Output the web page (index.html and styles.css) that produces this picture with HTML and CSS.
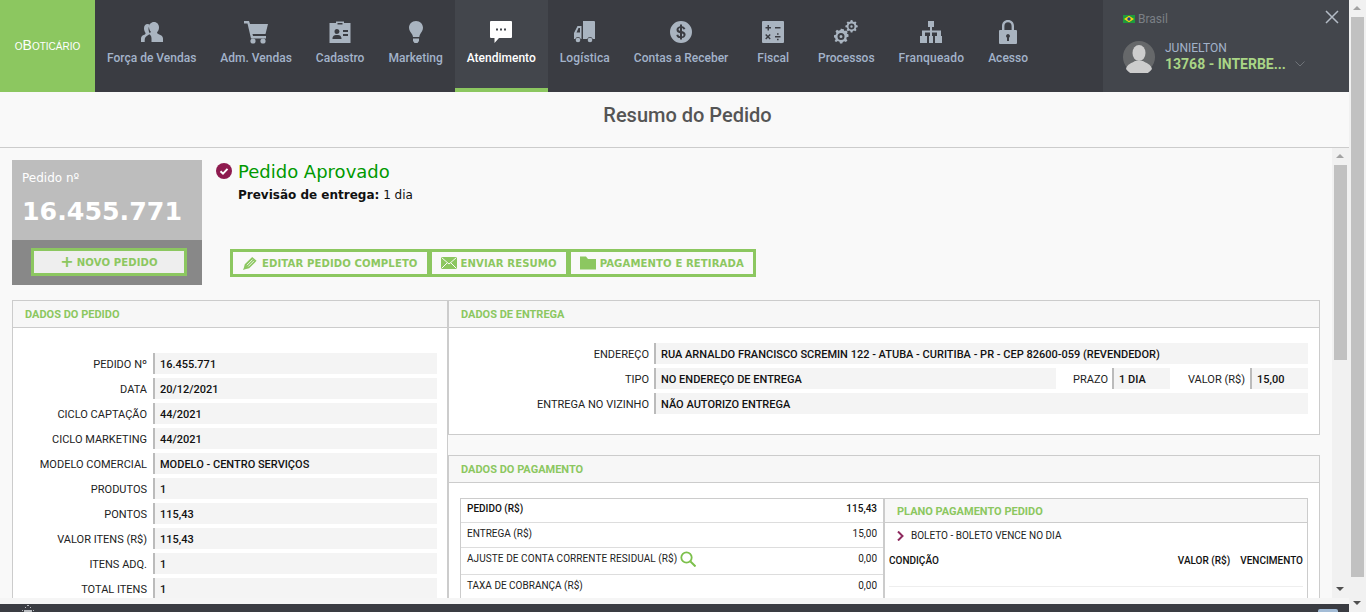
FILE: index.html
```html
<!DOCTYPE html>
<html lang="pt-BR">
<head>
    <meta charset="UTF-8">
    <meta name="viewport" content="width=device-width, initial-scale=1.0">
    <title>Resumo do Pedido</title>
    <link rel="stylesheet" href="styles.css">
</head>
<body>
<div class="page">
    <div class="main">
        <!-- Top menu -->
        <header class="topbar">
            <div class="logo">oBoticário</div>
            <nav class="menu">
                <a class="menu-item">
                    <svg viewBox="0 0 24 24"><path d="M14 2c3 0 5 2.400 5 5.500 0 2-.8 3.600-1.900 4.700 0 1 .4 1.500 1.600 2 2.300.9 4.300 1.900 4.300 4.300v3.500H11.500v-3.500c0-2.400-1.200-3.800-3-4.700 1.500-.6 2.300-1.200 2.300-2.200-1-1.100-1.800-2.700-1.800-4.600C9 4.400 11 2 14 2z"/><path d="M7.500 4c1 0 1.800.3 2.400.9-1 1.300-1.500 3-1.400 4.700.1 1.500.6 2.900 1.400 4 0 .7-.8 1-2 1.600-2.200 1.100-3.200 2.800-3.200 4.800v2H1v-3.500c0-2 1.500-3 3.300-3.700 1-.4 1.300-.9 1.300-1.700C4.600 11.600 4 10.100 4 8.300 4 5.800 5.400 4 7.500 4z"/></svg>
                    <span>Força de Vendas</span>
                </a>
                <a class="menu-item">
                    <svg viewBox="0 0 24 24"><path d="M0 1h5l1 3h18l-2.500 10H8.500l.5 2h13v2.500H7L3.500 3.500H0z"/><circle cx="9" cy="21" r="2.600"/><circle cx="19" cy="21" r="2.600"/></svg>
                    <span>Adm. Vendas</span>
                </a>
                <a class="menu-item">
                    <svg viewBox="0 0 24 24"><path fill-rule="evenodd" d="M1.500 3H8V1.500h8V3h6.500v20h-21zM9.500 3v1.500h5V3zM9 9a2.500 2.500 0 1 0 0 5 2.500 2.500 0 0 0 0-5zM4.500 19h9c0-2.500-1-4-4.500-4s-4.500 1.500-4.500 4zM15 10v2h5v-2zM15 14v2h5v-2z"/></svg>
                    <span>Cadastro</span>
                </a>
                <a class="menu-item">
                    <svg viewBox="0 0 24 24"><path d="M12 1c4.200 0 7 3 7 6.800 0 3-2 4.800-3 6.700-.4.800-.6 1.500-.7 2.500H9c-.1-1-.4-1.700-.8-2.500C7 12.600 5 10.800 5 7.800 5 4 7.800 1 12 1z"/><path d="M9 18.500h6V21l-1.500 2h-3L9 21z"/></svg>
                    <span>Marketing</span>
                </a>
                <a class="menu-item active">
                    <svg viewBox="0 0 24 24"><path fill-rule="evenodd" d="M2 1h20a1 1 0 0 1 1 1v15a1 1 0 0 1-1 1H10l-4.500 5v-5H2a1 1 0 0 1-1-1V2a1 1 0 0 1 1-1zM7 8.500v2h2v-2zM11 8.500v2h2v-2zM15 8.500v2h2v-2z"/></svg>
                    <span>Atendimento</span>
                </a>
                <a class="menu-item spaced-sm">
                    <svg viewBox="0 0 24 24"><path fill-rule="evenodd" d="M10 1h11a1 1 0 0 1 1 1v17h-2.200a3 3 0 0 0-5.600 0H10zM8.500 6v13H7.800a3 3 0 0 0-5.600 0H1v-6l3.500-7zM3.500 12.500h3.500V8H5.500z"/><circle cx="5" cy="20" r="2.300"/><circle cx="17" cy="20" r="2.300"/></svg>
                    <span>Logística</span>
                </a>
                <a class="menu-item">
                    <svg viewBox="0 0 24 24"><path fill-rule="evenodd" d="M12 1a11 11 0 1 1 0 22 11 11 0 0 1 0-22zM11 4.500v1.700c-2 .3-3.500 1.600-3.500 3.500 0 2.200 1.700 3 3.500 3.500v3c-.9-.2-1.500-.7-1.700-1.700l-2 .4c.3 1.900 1.700 3 3.700 3.200v1.400h2v-1.400c2.100-.3 3.600-1.600 3.600-3.600 0-2.300-1.800-3.100-3.600-3.600V8.100c.7.200 1.200.6 1.400 1.400l2-.4c-.3-1.700-1.600-2.700-3.400-2.900V4.500zM11 8.100v2.800c-.9-.3-1.400-.6-1.400-1.300 0-.8.600-1.300 1.400-1.500zM13 13.500c1 .3 1.500.7 1.500 1.400 0 .8-.6 1.300-1.500 1.500z"/></svg>
                    <span>Contas a Receber</span>
                </a>
                <a class="menu-item wide">
                    <svg viewBox="0 0 24 24"><path fill-rule="evenodd" d="M2 1h20a1 1 0 0 1 1 1v20a1 1 0 0 1-1 1H2a1 1 0 0 1-1-1V2a1 1 0 0 1 1-1zM6.500 5v2h-2v1.500h2v2H8v-2h2V7H8V5zM14 7v1.500h5.500V7zM5.200 14l-1 1 1.700 1.800-1.700 1.700 1 1 1.800-1.700 1.700 1.700 1-1-1.700-1.700 1.700-1.800-1-1-1.700 1.800zM14 16v1.500h5.500V16zM16 13.200v1.600h1.600v-1.600zM16 18.700v1.600h1.600v-1.600z"/></svg>
                    <span>Fiscal</span>
                </a>
                <a class="menu-item">
                    <svg viewBox="0 0 24 24"><path fill-rule="evenodd" d="M8 9l1.800.3.600 1.800 1.800-.7 1.500 1.500-.9 1.700 1.700.9v2.200l-1.900.5-.2 1.900 1 1.500-1.500 1.500-1.700-.9-1.400.9-.6 1.400H6l-.5-1.800-1.700-.6-1.700 1L.6 21.100l1-1.700-.6-1.600-1-.4v-2.200l1.800-.5.600-1.700-.9-1.700 1.500-1.500 1.700.9 1.700-.7.5-1.500zM7 13a3.500 3.500 0 1 0 0 7 3.500 3.500 0 0 0 0-7zM7 15a1.500 1.500 0 1 1 0 3 1.500 1.500 0 0 1 0-3z"/><path fill-rule="evenodd" d="M17.500 0l1 .2.300 1.400 1.200.5 1.300-.7 1.200 1.200-.7 1.200.5 1.200 1.400.4v1.800l-1.400.4-.5 1.200.7 1.200-1.200 1.200-1.300-.7-1.200.5-.4 1.400h-1.700l-.4-1.400-1.200-.5-1.300.7-1.200-1.200.8-1.200-.5-1.200-1.500-.4V5.400l1.500-.4.5-1.200-.8-1.200 1.200-1.200 1.300.7 1.200-.5.3-1.400zM17.500 3.500a3 3 0 1 0 0 6 3 3 0 0 0 0-6zM17.500 5.300a1.200 1.200 0 1 1 0 2.400 1.200 1.200 0 0 1 0-2.400z"/></svg>
                    <span>Processos</span>
                </a>
                <a class="menu-item spaced-md">
                    <svg viewBox="0 0 24 24"><path d="M9 1h6v6h-2v3.500h9V16h1v7h-7v-7h2v-3.500h-5V16h1v7H10v-7h1v-3.500H6V16h2v7H1v-7h2v-5.500h8V7H9z"/></svg>
                    <span>Franqueado</span>
                </a>
                <a class="menu-item">
                    <svg viewBox="0 0 24 24"><path fill-rule="evenodd" d="M12 0c3.700 0 6 2.600 6 6v4h2a1 1 0 0 1 1 1v12a1 1 0 0 1-1 1H4a1 1 0 0 1-1-1V11a1 1 0 0 1 1-1h2V6c0-3.400 2.300-6 6-6zM12 2.200c-2.200 0-3.600 1.600-3.600 3.900V10h7.200V6.100c0-2.300-1.400-3.900-3.600-3.900zM12 14a2 2 0 0 0-1 3.700V21h2v-3.300a2 2 0 0 0-1-3.700z"/></svg>
                    <span>Acesso</span>
                </a>
            </nav>
            <div class="user">
                <div class="country">
                    <svg class="flag" viewBox="0 0 12 8"><rect width="12" height="8" fill="#1e9a3c"/><path d="M6 .8L11 4 6 7.200 1 4z" fill="#f6d80f"/><circle cx="6" cy="4" r="1.700" fill="#1d3f94"/></svg>
                    <span>Brasil</span>
                </div>
                <div class="user-info">
                    <svg class="avatar" viewBox="0 0 32 32"><circle cx="16" cy="16" r="16" fill="#66686a"/><ellipse cx="16" cy="12" rx="6.500" ry="8" fill="#cdcdcd"/><path d="M3 28c1-5 6-6 9-8h8c3 2 8 3 9 8a16 16 0 0 1-26 0z" fill="#cdcdcd"/></svg>
                    <div class="user-text">
                        <div class="user-name">JUNIELTON</div>
                        <div class="user-code">13768 - INTERBE...</div>
                    </div>
                    <svg class="chevron" viewBox="0 0 10 6"><path d="M.5.5L5 5 9.500.5" fill="none" stroke="#6f7378"/></svg>
                </div>
                <svg class="close" viewBox="0 0 14 14"><path d="M1 1l12 12M13 1L1 13" stroke="#b4bcc6" stroke-width="1.500"/></svg>
            </div>
        </header>

        <h1 class="page-title">Resumo do Pedido</h1>

        <div class="scroll-area">
            <div class="content">
                <section class="summary">
                    <div class="order-box">
                        <div class="order-top">
                            <div class="order-label">Pedido nº</div>
                            <div class="order-number">16.455.771</div>
                        </div>
                        <div class="order-bottom">
                            <a class="btn btn-new"><span class="plus">+</span>NOVO PEDIDO</a>
                        </div>
                    </div>
                    <div class="order-status">
                        <div class="status-line">
                            <svg class="status-icon" viewBox="0 0 16 16"><circle cx="8" cy="8" r="8" fill="#8e1b4f"/><path d="M4.500 8.200l2.500 2.400 4.500-4.700" fill="none" stroke="#fff" stroke-width="2"/></svg>
                            <span>Pedido Aprovado</span>
                        </div>
                        <div class="delivery"><b>Previsão de entrega:</b> 1 dia</div>
                        <div class="actions">
                            <a class="btn">
                                <svg viewBox="0 0 16 16"><path d="M10.500 1l5 4.500L7 14l-4.500 1L0 16l1-2.500 1-4z"/><path d="M4.500 10.500L11 4M6 12l6.500-6.500" fill="none" stroke="#f9f9f9"/></svg>
                                EDITAR PEDIDO COMPLETO
                            </a>
                            <a class="btn">
                                <svg viewBox="0 0 16 14"><rect y="1" width="16" height="12"/><path d="M.5 1.500L8 8l7.500-6.500M.5 12.500L6 7M15.500 12.500L10 7" fill="none" stroke="#f9f9f9"/></svg>
                                ENVIAR RESUMO
                            </a>
                            <a class="btn">
                                <svg viewBox="0 0 16 13"><path d="M0 0h6l2 2.500h8V13H0z"/></svg>
                                PAGAMENTO E RETIRADA
                            </a>
                        </div>
                    </div>
                </section>

                <section class="panels">
                    <div class="panel panel-order">
                        <h2 class="panel-title">DADOS DO PEDIDO</h2>
                        <div class="panel-body rows">
                            <div class="row"><label>PEDIDO Nº</label><div class="val">16.455.771</div></div>
                            <div class="row"><label>DATA</label><div class="val">20/12/2021</div></div>
                            <div class="row"><label>CICLO CAPTAÇÃO</label><div class="val">44/2021</div></div>
                            <div class="row"><label>CICLO MARKETING</label><div class="val">44/2021</div></div>
                            <div class="row"><label>MODELO COMERCIAL</label><div class="val">MODELO - CENTRO SERVIÇOS</div></div>
                            <div class="row"><label>PRODUTOS</label><div class="val">1</div></div>
                            <div class="row"><label>PONTOS</label><div class="val">115,43</div></div>
                            <div class="row"><label>VALOR ITENS (R$)</label><div class="val">115,43</div></div>
                            <div class="row"><label>ITENS ADQ.</label><div class="val">1</div></div>
                            <div class="row"><label>TOTAL ITENS</label><div class="val">1</div></div>
                        </div>
                    </div>
                    <div class="panel-stack">
                        <div class="panel">
                            <h2 class="panel-title">DADOS DE ENTREGA</h2>
                            <div class="panel-body rows delivery-rows">
                                <div class="row"><label>ENDEREÇO</label><div class="val">RUA ARNALDO FRANCISCO SCREMIN 122 - ATUBA - CURITIBA - PR - CEP 82600-059 (REVENDEDOR)</div></div>
                                <div class="row">
                                    <label>TIPO</label><div class="val">NO ENDEREÇO DE ENTREGA</div>
                                    <label class="label-deadline">PRAZO</label><div class="val val-deadline">1 DIA</div>
                                    <label class="label-price">VALOR (R$)</label><div class="val val-price">15,00</div>
                                </div>
                                <div class="row"><label>ENTREGA NO VIZINHO</label><div class="val">NÃO AUTORIZO ENTREGA</div></div>
                            </div>
                        </div>
                        <div class="panel">
                            <h2 class="panel-title">DADOS DO PAGAMENTO</h2>
                            <div class="panel-body payment">
                                <div class="pay-table">
                                    <div class="pay-row strong"><span>PEDIDO (R$)</span><span>115,43</span></div>
                                    <div class="pay-row"><span>ENTREGA (R$)</span><span>15,00</span></div>
                                    <div class="pay-row tall">
                                        <span class="with-icon">AJUSTE DE CONTA CORRENTE RESIDUAL (R$)
                                            <svg viewBox="0 0 16 16"><circle cx="6.500" cy="6.500" r="5.200" fill="none" stroke="#7cc04b" stroke-width="1.800"/><path d="M10.500 10.500L15.500 15.500" stroke="#7cc04b" stroke-width="2"/></svg>
                                        </span>
                                        <span>0,00</span>
                                    </div>
                                    <div class="pay-row tall"><span>TAXA DE COBRANÇA (R$)</span><span>0,00</span></div>
                                </div>
                                <div class="plan">
                                    <h3 class="plan-title">PLANO PAGAMENTO PEDIDO</h3>
                                    <div class="plan-type">
                                        <svg viewBox="0 0 7 10"><path d="M1 .5L5.500 5 1 9.500" fill="none" stroke="#8e2a5e" stroke-width="2"/></svg>
                                        BOLETO - BOLETO VENCE NO DIA
                                    </div>
                                    <div class="plan-head">
                                        <span class="plan-cond">CONDIÇÃO</span>
                                        <span>VALOR (R$)</span>
                                        <span>VENCIMENTO</span>
                                    </div>
                                </div>
                            </div>
                        </div>
                    </div>
                </section>
            </div>
            <div class="scrollbar inner">
                <div class="arrow up"></div>
                <div class="thumb"></div>
                <div class="arrow down"></div>
            </div>
        </div>

        <div class="gap-strip"></div>
        <footer class="footer">
            <svg class="footer-logo" viewBox="0 0 16 8"><path d="M2 6h1v1H2zM5 3h1v1H5zM7 1h2v1H7zM10 3h1v1h-1zM13 6h1v1h-1zM4 6h8v2H4z" fill="#b9bcc0"/></svg>
            <div class="footer-btn"></div>
        </footer>
    </div>
    <div class="scrollbar outer">
        <div class="arrow up"></div>
        <div class="thumb"></div>
        <div class="arrow down"></div>
    </div>
</div>
</body>
</html>
```

FILE: styles.css
```css
:root {
    --green: #8cc760;
    --dark: #3a3c42;
    --dark-light: #43464c;
    --menu-text: #a3b3ca;
    --line: #cccccc;
}
html, body {
    margin: 0;
    height: 100%;
    overflow: hidden;
}
body {
    font-family: 'Roboto', sans-serif;
    font-size: 11px;
    color: #222;
    background: #f9f9f9;
}
.page {
    display: flex;
    height: 612px;
}
.main {
    flex: 1;
    min-width: 0;
    display: flex;
    flex-direction: column;
}

/* Top menu */
.topbar {
    display: flex;
    height: 92px;
    flex: none;
    background: var(--dark);
}
.logo {
    width: 95px;
    flex: none;
    background: var(--green);
    color: #fff;
    font-family: 'Liberation Sans', sans-serif;
    font-size: 14px;
    font-variant: small-caps;
    display: flex;
    align-items: center;
    justify-content: center;
    padding-bottom: 2px;
    box-sizing: border-box;
}
.menu {
    display: flex;
    flex: 1;
}
.menu-item {
    display: flex;
    flex-direction: column;
    align-items: center;
    padding: 20px 12px 0;
    color: var(--menu-text);
    font-size: 12px;
    font-weight: 500;
    white-space: nowrap;
    box-sizing: border-box;
    border-bottom: 4px solid transparent;
}
.menu-item.wide {
    padding-left: 17px;
    padding-right: 17px;
}
.menu-item.spaced-sm span {
    letter-spacing: .1px;
}
.menu-item.spaced-md span {
    letter-spacing: .2px;
}
.menu-item svg {
    width: 24px;
    height: 24px;
    fill: #a9b4c0;
    margin-bottom: 7px;
}
.menu-item.active {
    background: var(--dark-light);
    color: #fff;
    border-bottom-color: var(--green);
}
.menu-item.active svg {
    fill: #fff;
}
.user {
    width: 246px;
    flex: none;
    background: var(--dark-light);
    position: relative;
    padding: 12px 20px;
    box-sizing: border-box;
}
.country {
    display: flex;
    align-items: center;
    gap: 3px;
    color: #7b8086;
    font-size: 12px;
    height: 14px;
}
.flag {
    width: 12px;
    height: 8px;
}
.user-info {
    display: flex;
    align-items: center;
    margin-top: 15px;
}
.avatar {
    width: 32px;
    height: 32px;
    margin-right: 10px;
}
.user-text {
    margin-top: -2px;
}
.user-name {
    color: var(--menu-text);
    font-size: 12px;
}
.user-code {
    color: #a9d586;
    font-size: 14px;
    font-weight: 700;
    margin-top: 1px;
    white-space: nowrap;
}
.chevron {
    width: 10px;
    height: 6px;
    margin: 14px 0 0 9px;
}
.close {
    position: absolute;
    top: 10px;
    right: 10px;
    width: 14px;
    height: 14px;
}

.page-title {
    margin: 0;
    height: 56px;
    flex: none;
    box-sizing: border-box;
    padding: 11px 0 0 26px;
    text-align: center;
    font-size: 20px;
    font-weight: 500;
    line-height: 24px;
    color: #555;
    background: #f9f9f9;
    border-bottom: 1px solid var(--line);
}

/* Scroll region */
.scroll-area {
    flex: 1;
    min-height: 0;
    display: flex;
}
.content {
    flex: 1;
    min-width: 0;
    overflow: hidden;
    padding: 12px 12px 0;
    box-sizing: border-box;
}
.scrollbar {
    width: 17px;
    flex: none;
    display: flex;
    flex-direction: column;
    background: #f1f1f1;
}
.arrow {
    height: 17px;
    flex: none;
    position: relative;
}
.arrow::after {
    content: "";
    position: absolute;
    left: 4px;
    top: 6px;
    border-left: 4px solid transparent;
    border-right: 4px solid transparent;
}
.arrow.up::after {
    border-bottom: 4px solid #a3a3a3;
}
.arrow.down {
    margin-top: auto;
}
.arrow.down::after {
    border-top: 4px solid #505050;
}
.thumb {
    margin: 0 2px;
    background: #c1c1c1;
}
.inner .thumb {
    height: 195px;
}
.outer .thumb {
    height: 560px;
}

/* Order summary */
.summary {
    display: flex;
    height: 125px;
}
.order-box {
    width: 190px;
    flex: none;
    display: flex;
    flex-direction: column;
}
.order-top {
    height: 80px;
    background: #bdbdbd;
    color: #fff;
    font-family: 'DejaVu Sans', sans-serif;
    padding: 11px 10px 0;
    box-sizing: border-box;
}
.order-label {
    font-size: 12px;
}
.order-number {
    font-size: 25.300px;
    font-weight: 700;
    margin-top: 12px;
    line-height: 30px;
}
.order-bottom {
    flex: 1;
    background: #888;
    padding: 8px 15px 0 19px;
}
.btn {
    display: flex;
    align-items: center;
    justify-content: center;
    height: 28px;
    box-sizing: border-box;
    border: 3px solid var(--green);
    color: var(--green);
    font-family: 'DejaVu Sans', sans-serif;
    font-size: 10.100px;
    letter-spacing: .1px;
    font-weight: 700;
    white-space: nowrap;
    padding: 0 9px;
}
.btn svg {
    width: 16px;
    height: 14px;
    fill: var(--green);
    margin-right: 4px;
}
.btn-new {
    background: #eee;
}
.plus {
    font-size: 16px;
    margin-right: 3px;
    line-height: 16px;
}
.order-status {
    margin-left: 14px;
    flex: 1;
    font-family: 'DejaVu Sans', sans-serif;
    color: #111;
}
.status-line {
    display: flex;
    align-items: center;
    gap: 6px;
    color: #090;
    font-size: 18px;
    height: 22px;
}
.status-icon {
    width: 16px;
    height: 16px;
}
.delivery {
    margin: 6px 0 0 22px;
    font-size: 12px;
}
.actions {
    display: flex;
    margin: 47px 0 0 14px;
}
.actions .btn + .btn {
    margin-left: -1px;
}

/* Panels */
.panels {
    display: grid;
    grid-template-columns: 436px 1fr;
    margin-top: 15px;
}
.panel {
    border: 1px solid var(--line);
    background: #fff;
}
.panel-order {
    border-bottom: 0;
    height: 400px;
}
.panel-stack {
    display: flex;
    flex-direction: column;
    gap: 20px;
}
.panel-title {
    margin: 0;
    height: 27px;
    box-sizing: border-box;
    padding: 0 12px;
    font-size: 11px;
    font-weight: 700;
    line-height: 27px;
    color: var(--green);
    background: #f7f7f7;
    border-bottom: 1px solid var(--line);
}
.rows {
    display: flex;
    flex-direction: column;
    gap: 4px;
    padding: 25px 10px 0 0;
}
.delivery-rows {
    padding: 15px 11px 20px 0;
}
.row {
    display: flex;
    height: 21px;
    line-height: 23px;
}
.row label {
    width: 134px;
    flex: none;
    text-align: right;
    padding-right: 6px;
    box-sizing: content-box;
}
.delivery-rows .row label {
    width: 200px;
    padding-right: 5px;
}
.delivery-rows .row label.label-deadline {
    width: 52px;
    padding-right: 4px;
}
.delivery-rows .row label.label-price {
    width: 75px;
    padding-right: 5px;
}
.val {
    flex: 1;
    background: #f4f4f4;
    border-left: 2px solid #bbb;
    padding-left: 5px;
    font-weight: 500;
    color: #111;
    min-width: 0;
}
.val-deadline {
    flex: none;
    width: 51px;
}
.val-price {
    flex: none;
    width: 51px;
}

/* Payment */
.payment {
    display: flex;
    padding: 15px 11px 0;
    height: 116px;
    overflow: hidden;
    box-sizing: border-box;
    font-size: 10px;
}
.pay-table {
    width: 423px;
    flex: none;
    box-sizing: border-box;
    border: 1px solid var(--line);
    border-right: 0;
}
.pay-row {
    display: flex;
    justify-content: space-between;
    box-sizing: border-box;
    height: 25px;
    line-height: 21px;
    padding: 0 6px;
    border-bottom: 1px solid #ddd;
}
.pay-row.strong {
    height: 24px;
    line-height: 19px;
    font-weight: 500;
    color: #111;
}
.pay-row.tall {
    height: 27px;
    line-height: 21px;
}
.with-icon {
    display: flex;
    align-items: center;
    gap: 3px;
    height: 21px;
    letter-spacing: .08px;
}
.with-icon svg {
    width: 16px;
    height: 16px;
    margin-top: 1px;
}
.plan {
    flex: 1;
    border: 1px solid var(--line);
    border-left-width: 2px;
}
.plan-title {
    margin: 0;
    height: 24px;
    box-sizing: border-box;
    padding-left: 12px;
    font-size: 11px;
    font-weight: 700;
    line-height: 26px;
    color: var(--green);
    background: #f7f7f7;
    border-bottom: 1px solid var(--line);
}
.plan-type {
    display: flex;
    align-items: center;
    height: 25px;
    padding-left: 12px;
    color: #222;
}
.plan-type svg {
    width: 7px;
    height: 10px;
    margin-right: 7px;
}
.plan-head {
    display: flex;
    gap: 10px;
    margin: 0 4px;
    height: 38px;
    line-height: 25px;
    font-weight: 500;
    color: #111;
    border-bottom: 1px solid #eee;
}
.plan-cond {
    flex: 1;
}

.gap-strip {
    height: 6px;
    flex: none;
    background: #f5f5f5;
}
.footer {
    height: 8px;
    flex: none;
    background: var(--dark);
    position: relative;
    overflow: hidden;
}
.footer-logo {
    position: absolute;
    left: 20px;
    top: 0;
    width: 16px;
    height: 8px;
}
.footer-btn {
    position: absolute;
    left: 1318px;
    top: 5px;
    width: 20px;
    height: 10px;
    background: #a3bcd6;
    border-radius: 2px;
}
```
